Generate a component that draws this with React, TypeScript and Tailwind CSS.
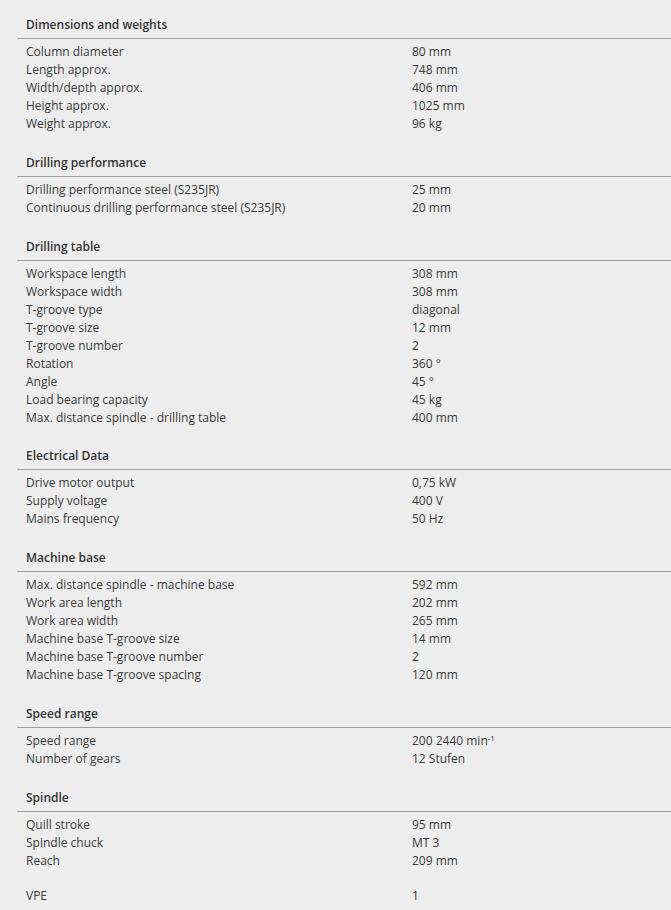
import React from "react";

type Section = { title?: string; rows: [string, React.ReactNode][] };

const sections: Section[] = [
  {
    title: "Dimensions and weights",
    rows: [
      ["Column diameter", "80 mm"],
      ["Length approx.", "748 mm"],
      ["Width/depth approx.", "406 mm"],
      ["Height approx.", "1025 mm"],
      ["Weight approx.", "96 kg"],
    ],
  },
  {
    title: "Drilling performance",
    rows: [
      ["Drilling performance steel (S235JR)", "25 mm"],
      ["Continuous drilling performance steel (S235JR)", "20 mm"],
    ],
  },
  {
    title: "Drilling table",
    rows: [
      ["Workspace length", "308 mm"],
      ["Workspace width", "308 mm"],
      ["T-groove type", "diagonal"],
      ["T-groove size", "12 mm"],
      ["T-groove number", "2"],
      ["Rotation", "360 °"],
      ["Angle", "45 °"],
      ["Load bearing capacity", "45 kg"],
      ["Max. distance spindle - drilling table", "400 mm"],
    ],
  },
  {
    title: "Electrical Data",
    rows: [
      ["Drive motor output", "0,75 kW"],
      ["Supply voltage", "400 V"],
      ["Mains frequency", "50 Hz"],
    ],
  },
  {
    title: "Machine base",
    rows: [
      ["Max. distance spindle - machine base", "592 mm"],
      ["Work area length", "202 mm"],
      ["Work area width", "265 mm"],
      ["Machine base T-groove size", "14 mm"],
      ["Machine base T-groove number", "2"],
      ["Machine base T-groove spacing", "120 mm"],
    ],
  },
  {
    title: "Speed range",
    rows: [
      [
        "Speed range",
        <span>
          200 2440 min<sup className="text-[8px]">-1</sup>
        </span>,
      ],
      ["Number of gears", "12 Stufen"],
    ],
  },
  {
    title: "Spindle",
    rows: [
      ["Quill stroke", "95 mm"],
      ["Spindle chuck", "MT 3"],
      ["Reach", "209 mm"],
    ],
  },
];

export default function App() {
  return (
    <div
      className="min-h-[910px] w-full bg-[#ededed] pt-[16px] text-[12px] leading-[18px] text-[#3a3a3a]"
      style={{ fontFamily: "'Open Sans', Roboto, sans-serif" }}
    >
      <div className="flex flex-col gap-[20.8px]">
        {sections.map((s) => (
          <div key={s.title}>
            <div className="ml-[17px] border-b border-[#a0a0a0] pb-[4px] pl-[9px] font-semibold text-[#333]">
              {s.title}
            </div>
            <div className="pt-[4px]">
              {s.rows.map(([k, v]) => (
                <div key={k} className="flex">
                  <div className="w-[412px] shrink-0 pl-[26px]">{k}</div>
                  <div>{v}</div>
                </div>
              ))}
            </div>
          </div>
        ))}
      </div>
      <div className="mt-[17px] flex">
        <div className="w-[412px] shrink-0 pl-[26px]">VPE</div>
        <div>1</div>
      </div>
    </div>
  );
}
